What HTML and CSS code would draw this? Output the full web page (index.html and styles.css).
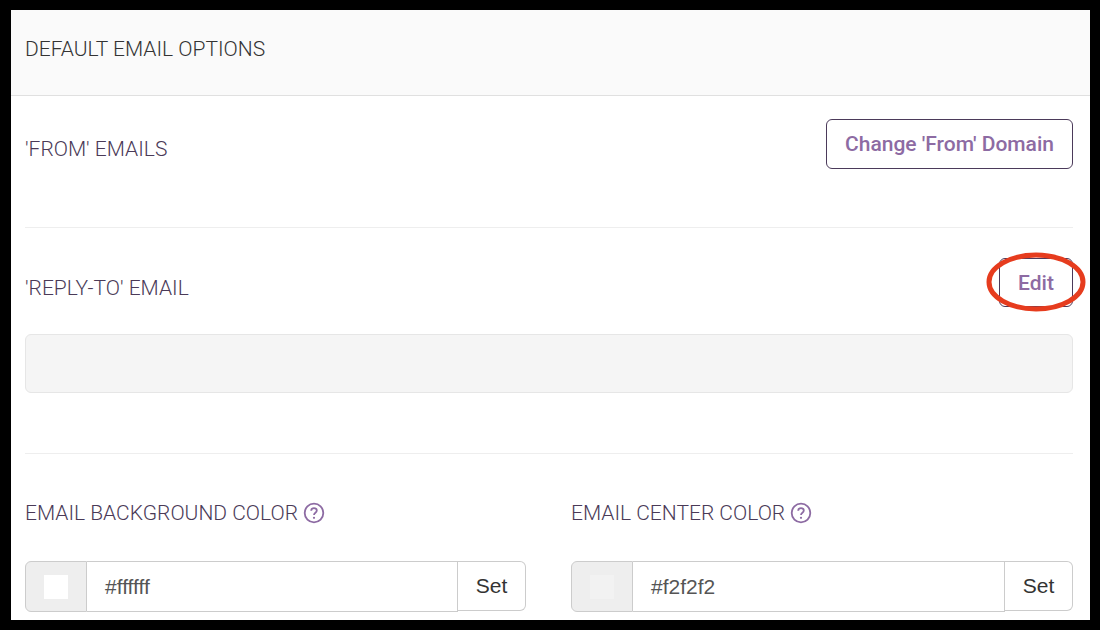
FILE: index.html
```html
<!DOCTYPE html>
<html lang="en">
<head>
    <meta charset="UTF-8">
    <meta name="viewport" content="width=device-width, initial-scale=1.0">
    <title>Default Email Options</title>
    <link rel="stylesheet" href="styles.css">
</head>
<body>
    <div class="panel">
        <div class="panel-header">DEFAULT EMAIL OPTIONS</div>
        <div class="panel-body">
            <div class="option-row from-row">
                <div class="option-label">'FROM' EMAILS</div>
                <button class="outline-btn from-btn">Change 'From' Domain</button>
            </div>
            <hr class="divider from-divider">
            <div class="option-row reply-row">
                <div class="option-label">'REPLY-TO' EMAIL</div>
                <div class="edit-wrap">
                    <button class="outline-btn edit-btn">Edit</button>
                    <svg class="edit-circle" width="100" height="60" viewBox="0 0 100 60">
                        <ellipse cx="50" cy="30" rx="47" ry="27" fill="none" stroke="#e63c1e" stroke-width="5"/>
                    </svg>
                </div>
            </div>
            <div class="reply-field"></div>
            <hr class="divider reply-divider">
            <div class="color-grid">
                <div class="color-option">
                    <div class="color-label">EMAIL BACKGROUND COLOR
                        <svg class="help-icon" width="22" height="22" viewBox="0 0 22 22">
                            <circle cx="11" cy="11" r="9.3" fill="none" stroke="#8d6ba3" stroke-width="1.8"/>
                            <path d="M8.2 8.8c0-1.6 1.2-2.6 2.8-2.6s2.8 1 2.8 2.4c0 2.2-2.8 2.2-2.8 4.4" fill="none" stroke="#8d6ba3" stroke-width="1.8"/>
                            <circle cx="11" cy="15.8" r="1.1" fill="#8d6ba3"/>
                        </svg>
                    </div>
                    <div class="color-input">
                        <div class="swatch-box"><span class="swatch swatch-white"></span></div>
                        <div class="color-value">#ffffff</div>
                        <button class="set-btn">Set</button>
                    </div>
                </div>
                <div class="color-option">
                    <div class="color-label">EMAIL CENTER COLOR
                        <svg class="help-icon" width="22" height="22" viewBox="0 0 22 22">
                            <circle cx="11" cy="11" r="9.3" fill="none" stroke="#8d6ba3" stroke-width="1.8"/>
                            <path d="M8.2 8.8c0-1.6 1.2-2.6 2.8-2.6s2.8 1 2.8 2.4c0 2.2-2.8 2.2-2.8 4.4" fill="none" stroke="#8d6ba3" stroke-width="1.8"/>
                            <circle cx="11" cy="15.8" r="1.1" fill="#8d6ba3"/>
                        </svg>
                    </div>
                    <div class="color-input">
                        <div class="swatch-box"><span class="swatch swatch-grey"></span></div>
                        <div class="color-value">#f2f2f2</div>
                        <button class="set-btn">Set</button>
                    </div>
                </div>
            </div>
        </div>
    </div>
</body>
</html>
```
FILE: styles.css
```css
html, body {
    height: 100%;
}
body {
    margin: 0;
    padding: 10px 10px 10px 11px;
    box-sizing: border-box;
    background-color: #000;
    font-family: 'Roboto', sans-serif;
    overflow: hidden;
}
.panel {
    height: 100%;
    background-color: #fff;
    overflow: hidden;
}
.panel-header {
    height: 78px;
    padding-left: 14px;
    padding-bottom: 7px;
    display: flex;
    align-items: center;
    background-color: #fafafa;
    border-bottom: 1px solid #e0e0e0;
    font-size: 21px;
    font-weight: 300;
    color: #333;
}
.panel-body {
    padding: 23px 17px 0 14px;
}
.option-row {
    display: flex;
    justify-content: space-between;
    align-items: center;
}
.option-label {
    font-size: 21px;
    font-weight: 300;
    color: #4a3a57;
    margin-top: 10px;
}
.outline-btn {
    background: #fff;
    border: 1px solid #4b3a5a;
    border-radius: 6px;
    font-family: 'Roboto', sans-serif;
    font-size: 21px;
    font-weight: 500;
    color: #8d6ba3;
    padding: 0;
}
.from-btn {
    width: 247px;
    height: 50px;
}
.edit-wrap {
    position: relative;
}
.edit-btn {
    display: block;
    width: 74px;
    height: 49px;
}
.edit-circle {
    position: absolute;
    left: -13px;
    top: -6px;
}
.divider {
    border: none;
    border-top: 1px solid #eee;
    margin: 0;
}
.from-divider {
    margin-top: 58px;
}
.reply-row {
    margin-top: 30px;
}
.reply-field {
    height: 57px;
    margin-top: 27px;
    background-color: #f5f5f5;
    border: 1px solid #e6e6e6;
    border-radius: 6px;
}
.reply-divider {
    margin-top: 60px;
}
.color-grid {
    display: grid;
    grid-template-columns: 501px 502px;
    column-gap: 45px;
    margin-top: 46px;
}
.color-label {
    display: flex;
    align-items: center;
    gap: 5px;
    height: 26px;
    font-size: 21px;
    font-weight: 300;
    color: #4a3a57;
}
.color-input {
    display: flex;
    height: 51px;
    margin-top: 35px;
}
.swatch-box {
    width: 62px;
    flex-shrink: 0;
    display: flex;
    align-items: center;
    justify-content: center;
    box-sizing: border-box;
    background-color: #eee;
    border: 1px solid #ccc;
    border-radius: 6px 0 0 6px;
}
.swatch {
    width: 24px;
    height: 24px;
}
.swatch-white {
    background-color: #fff;
}
.swatch-grey {
    background-color: #f2f2f2;
}
.color-value {
    flex: 1;
    display: flex;
    align-items: center;
    padding-left: 18px;
    border-top: 1px solid #ccc;
    border-bottom: 1px solid #ccc;
    border-right: 1px solid #ccc;
    font-family: 'Liberation Sans', sans-serif;
    font-size: 21px;
    color: #555;
}
.set-btn {
    width: 68px;
    height: 50px;
    box-sizing: border-box;
    background: #fff;
    border: 1px solid #ccc;
    border-left: none;
    border-radius: 0 6px 6px 0;
    font-family: 'Liberation Sans', sans-serif;
    font-size: 21px;
    color: #333;
    padding: 0;
}
```
